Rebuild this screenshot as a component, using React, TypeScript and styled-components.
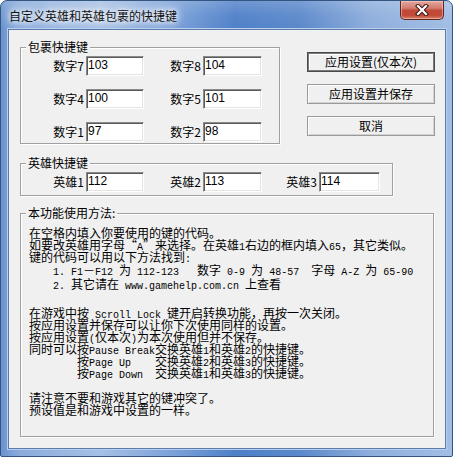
import React from "react";
import styled, { createGlobalStyle } from "styled-components";

const GlobalStyle = createGlobalStyle`
  html, body {
    margin: 0;
    padding: 0;
    background: #ffffff;
  }
  body {
    font-family: "Noto Sans CJK SC", sans-serif;
    font-size: 12px;
    color: #000;
  }
`;

const packKeys = [
  [
    { label: "数字7", value: "103" },
    { label: "数字8", value: "104" },
  ],
  [
    { label: "数字4", value: "100" },
    { label: "数字5", value: "101" },
  ],
  [
    { label: "数字1", value: "97" },
    { label: "数字2", value: "98" },
  ],
];

const heroKeys = [
  { label: "英雄1", value: "112", lw: 40, iw: 58 },
  { label: "英雄2", value: "113", lw: 41, iw: 59 },
  { label: "英雄3", value: "114", lw: 39, iw: 61 },
];

const App: React.FC = () => {
  return (
    <>
      <GlobalStyle />
      <Window lang="zh-CN">
        {/* Title bar */}
        <TitleBar>
          <Title>自定义英雄和英雄包裹的快捷键</Title>
          <CloseButton>
            <svg width="16" height="12" viewBox="0 0 16 12">
              <path d="M4 2 L12 10 M12 2 L4 10" stroke="#3b1612" strokeWidth="4.2" strokeLinecap="square" />
              <path d="M4 2 L12 10 M12 2 L4 10" stroke="#ffffff" strokeWidth="2.2" strokeLinecap="square" />
            </svg>
          </CloseButton>
        </TitleBar>

        <Client>
          <TopRow>
            <Group $width={260}>
              <Legend>包裹快捷键</Legend>
              <GroupBody $pad="2px 0 1px 23px" $gap={13}>
                {packKeys.map((row, i) => (
                  <KeyRow key={i}>
                    {row.map((k, j) => (
                      <Field key={k.label}>
                        <FieldLabel $width={j === 0 ? 40 : 41}>{k.label}</FieldLabel>
                        <KeyInput $width={j === 0 ? 58 : 59} defaultValue={k.value} />
                      </Field>
                    ))}
                  </KeyRow>
                ))}
              </GroupBody>
            </Group>

            <Buttons>
              <PushButton $isDefault>应用设置(仅本次)</PushButton>
              <PushButton>应用设置并保存</PushButton>
              <PushButton>取消</PushButton>
            </Buttons>
          </TopRow>

          <Group $width={373} $top={12}>
            <Legend>英雄快捷键</Legend>
            <GroupBody $pad="2px 0 3px 23px" $gap={0}>
              <KeyRow>
                {heroKeys.map((k) => (
                  <Field key={k.label}>
                    <FieldLabel $width={k.lw}>{k.label}</FieldLabel>
                    <KeyInput $width={k.iw} defaultValue={k.value} />
                  </Field>
                ))}
              </KeyRow>
            </GroupBody>
          </Group>

          <HelpGroup>
            <Legend>本功能使用方法:</Legend>
            <HelpBody>
              <Para>
                <Line>在空格内填入你要使用的键的代码。</Line>
                <Line>
                  如要改英雄用字母“<M>A</M>”来选择。在英雄<M>1</M>右边的框内填入<M>65</M>，其它类似。
                </Line>
                <Line>
                  键的代码可以用以下方法找到<M>:</M>
                </Line>
              </Para>
              <List>
                <ListLine>
                  <M>1. F1</M>－<M>F12 </M>为<M> 112-123   </M>数字<M> 0-9 </M>为<M> 48-57  </M>字母
                  <M> A-Z </M>为<M> 65-90</M>
                </ListLine>
                <ListLine>
                  <M>2. </M>其它请在<M> www.gamehelp.com.cn </M>上查看
                </ListLine>
              </List>
              <Para $top={16.5}>
                <Line>
                  在游戏中按<M> Scroll Lock </M>键开启转换功能，再按一次关闭。
                </Line>
                <Line>按应用设置并保存可以让你下次使用同样的设置。</Line>
                <Line>
                  按应用设置<M>(</M>仅本次<M>)</M>为本次使用但并不保存。
                </Line>
                <Line>
                  同时可以按<M>Pause Break</M>交换英雄<M>1</M>和英雄<M>2</M>的快捷键。
                </Line>
                <Line $indent={48}>
                  按<M>Page Up    </M>交换英雄<M>2</M>和英雄<M>3</M>的快捷键。
                </Line>
                <Line $indent={48}>
                  按<M>Page Down  </M>交换英雄<M>1</M>和英雄<M>3</M>的快捷键。
                </Line>
              </Para>
              <Para $top={13}>
                <Line>请注意不要和游戏其它的键冲突了。</Line>
                <Line>预设值是和游戏中设置的一样。</Line>
              </Para>
            </HelpBody>
          </HelpGroup>
        </Client>
      </Window>
    </>
  );
};

export default App;

const Window = styled.div`
  width: 453px;
  height: 457px;
  box-sizing: border-box;
  display: flex;
  flex-direction: column;
  padding: 0 6px 7px 7px;
  border: 1px solid #34557f;
  border-radius: 7px 7px 2px 2px;
  background: linear-gradient(
      to bottom,
      rgba(255, 255, 255, 0.18) 0px,
      rgba(255, 255, 255, 0.05) 14px,
      rgba(255, 255, 255, 0) 28px
    ),
    linear-gradient(
      to right,
      #6a94d0 0%,
      #8aacdc 4%,
      #a6c0e5 22%,
      #7ca2d9 38%,
      #4f80c8 52%,
      #5a88ca 66%,
      #8eaedc 82%,
      #a2bee5 100%
    );
  font-family: "Noto Sans CJK SC", sans-serif;
`;

const TitleBar = styled.div`
  height: 28px;
  display: flex;
  justify-content: space-between;
  align-items: flex-start;
  flex-shrink: 0;
`;

const Title = styled.div`
  margin-top: 8px;
  margin-left: 1px;
  font-size: 12px;
  line-height: 14px;
  color: #111;
  text-shadow: 0 0 5px #fff, 0 0 9px #fff, 0 0 12px rgba(255, 255, 255, 0.9);
`;

const CloseButton = styled.div`
  width: 44px;
  height: 19px;
  margin-right: 2px;
  box-sizing: border-box;
  display: flex;
  align-items: center;
  justify-content: center;
  border: 1px solid #5b2620;
  border-top: none;
  border-radius: 0 0 5px 5px;
  background: linear-gradient(
    to bottom,
    #e4a99f 0%,
    #d27b6d 40%,
    #bf4a39 52%,
    #c24a36 80%,
    #d8826c 100%
  );
  box-shadow: inset 0 0 0 1px rgba(255, 210, 200, 0.5);
`;

const Client = styled.div`
  flex: 1;
  display: flex;
  flex-direction: column;
  box-sizing: border-box;
  padding: 10px 10px 11px 11px;
  background: #f0f0f0;
  border: 1px solid #5a7bab;
  box-shadow: 0 0 0 1px #b9cfee;
`;

const TopRow = styled.div`
  display: flex;
  align-items: flex-start;
`;

const Group = styled.fieldset<{ $width?: number; $top?: number }>`
  margin: ${({ $top }) => $top || 0}px 0 0 0;
  padding: 0;
  min-width: 0;
  width: ${({ $width }) => ($width ? `${$width}px` : "auto")};
  box-sizing: border-box;
  flex-shrink: 0;
  border: 1px solid #a0a0a0;
  box-shadow: inset 1px 1px 0 #ffffff, 1px 1px 0 #ffffff;
`;

const HelpGroup = styled(Group)`
  flex: 1;
  margin: 10px 1px 0 0;
`;

const Legend = styled.legend`
  margin-left: 5px;
  padding: 0 2px;
  font-size: 12px;
  line-height: 14px;
  background: #f0f0f0;
`;

const GroupBody = styled.div<{ $pad: string; $gap: number }>`
  padding: ${({ $pad }) => $pad};
  display: flex;
  flex-direction: column;
  gap: ${({ $gap }) => $gap}px;
`;

const KeyRow = styled.div`
  display: flex;
  gap: 16px;
`;

const Field = styled.label`
  display: flex;
  align-items: center;
  gap: 2px;
`;

const FieldLabel = styled.span<{ $width: number }>`
  width: ${({ $width }) => $width}px;
  text-align: right;
  font-size: 12px;
  line-height: 14px;
  white-space: nowrap;
`;

const KeyInput = styled.input<{ $width: number }>`
  width: ${({ $width }) => $width}px;
  height: 20px;
  box-sizing: border-box;
  margin: 0;
  padding: 0 1px 2px 1px;
  font-family: "Liberation Sans", Arial, sans-serif;
  font-size: 12px;
  color: #000;
  background: #ffffff;
  border: 1px solid;
  border-color: #8a8a8a #ffffff #ffffff #8a8a8a;
  box-shadow: inset 1px 1px 0 #5a5a5a, inset -1px -1px 0 #e3e3e3;
  outline: none;
`;

const Buttons = styled.div`
  display: flex;
  flex-direction: column;
  gap: 12px;
  margin-left: 27px;
  padding-top: 12px;
  flex-shrink: 0;
`;

const PushButton = styled.button<{ $isDefault?: boolean }>`
  width: 128px;
  height: 20px;
  margin: 0;
  padding: 0;
  box-sizing: border-box;
  font-family: "Noto Sans CJK SC", sans-serif;
  font-size: 12px;
  line-height: 14px;
  color: #000;
  background: #f0f0f0;
  border: 1px solid ${({ $isDefault }) => ($isDefault ? "#4a4a4a" : "#9a9a9a")};
  box-shadow: ${({ $isDefault }) =>
    $isDefault
      ? "inset 0 0 0 1px #7a7a7a, inset 2px 2px 0 #ffffff"
      : "inset 1px 1px 0 #ffffff, inset -1px -1px 0 #d2d2d2"};
`;

const HelpBody = styled.div`
  padding: 7px 8px 0 8px;
`;

const Para = styled.div<{ $top?: number }>`
  margin-top: ${({ $top }) => $top || 0}px;
`;

const Line = styled.div<{ $indent?: number }>`
  padding-left: ${({ $indent }) => $indent || 0}px;
  font-size: 12px;
  line-height: 12px;
  height: 12px;
  white-space: nowrap;
`;

const List = styled.div`
  padding-left: 24px;
`;

const ListLine = styled.div`
  font-size: 12px;
  line-height: 13.5px;
  height: 13.5px;
  white-space: nowrap;
`;

const M = styled.span`
  font-family: "Liberation Mono", "DejaVu Sans Mono", monospace;
  font-size: 10px;
  white-space: pre;
`;
